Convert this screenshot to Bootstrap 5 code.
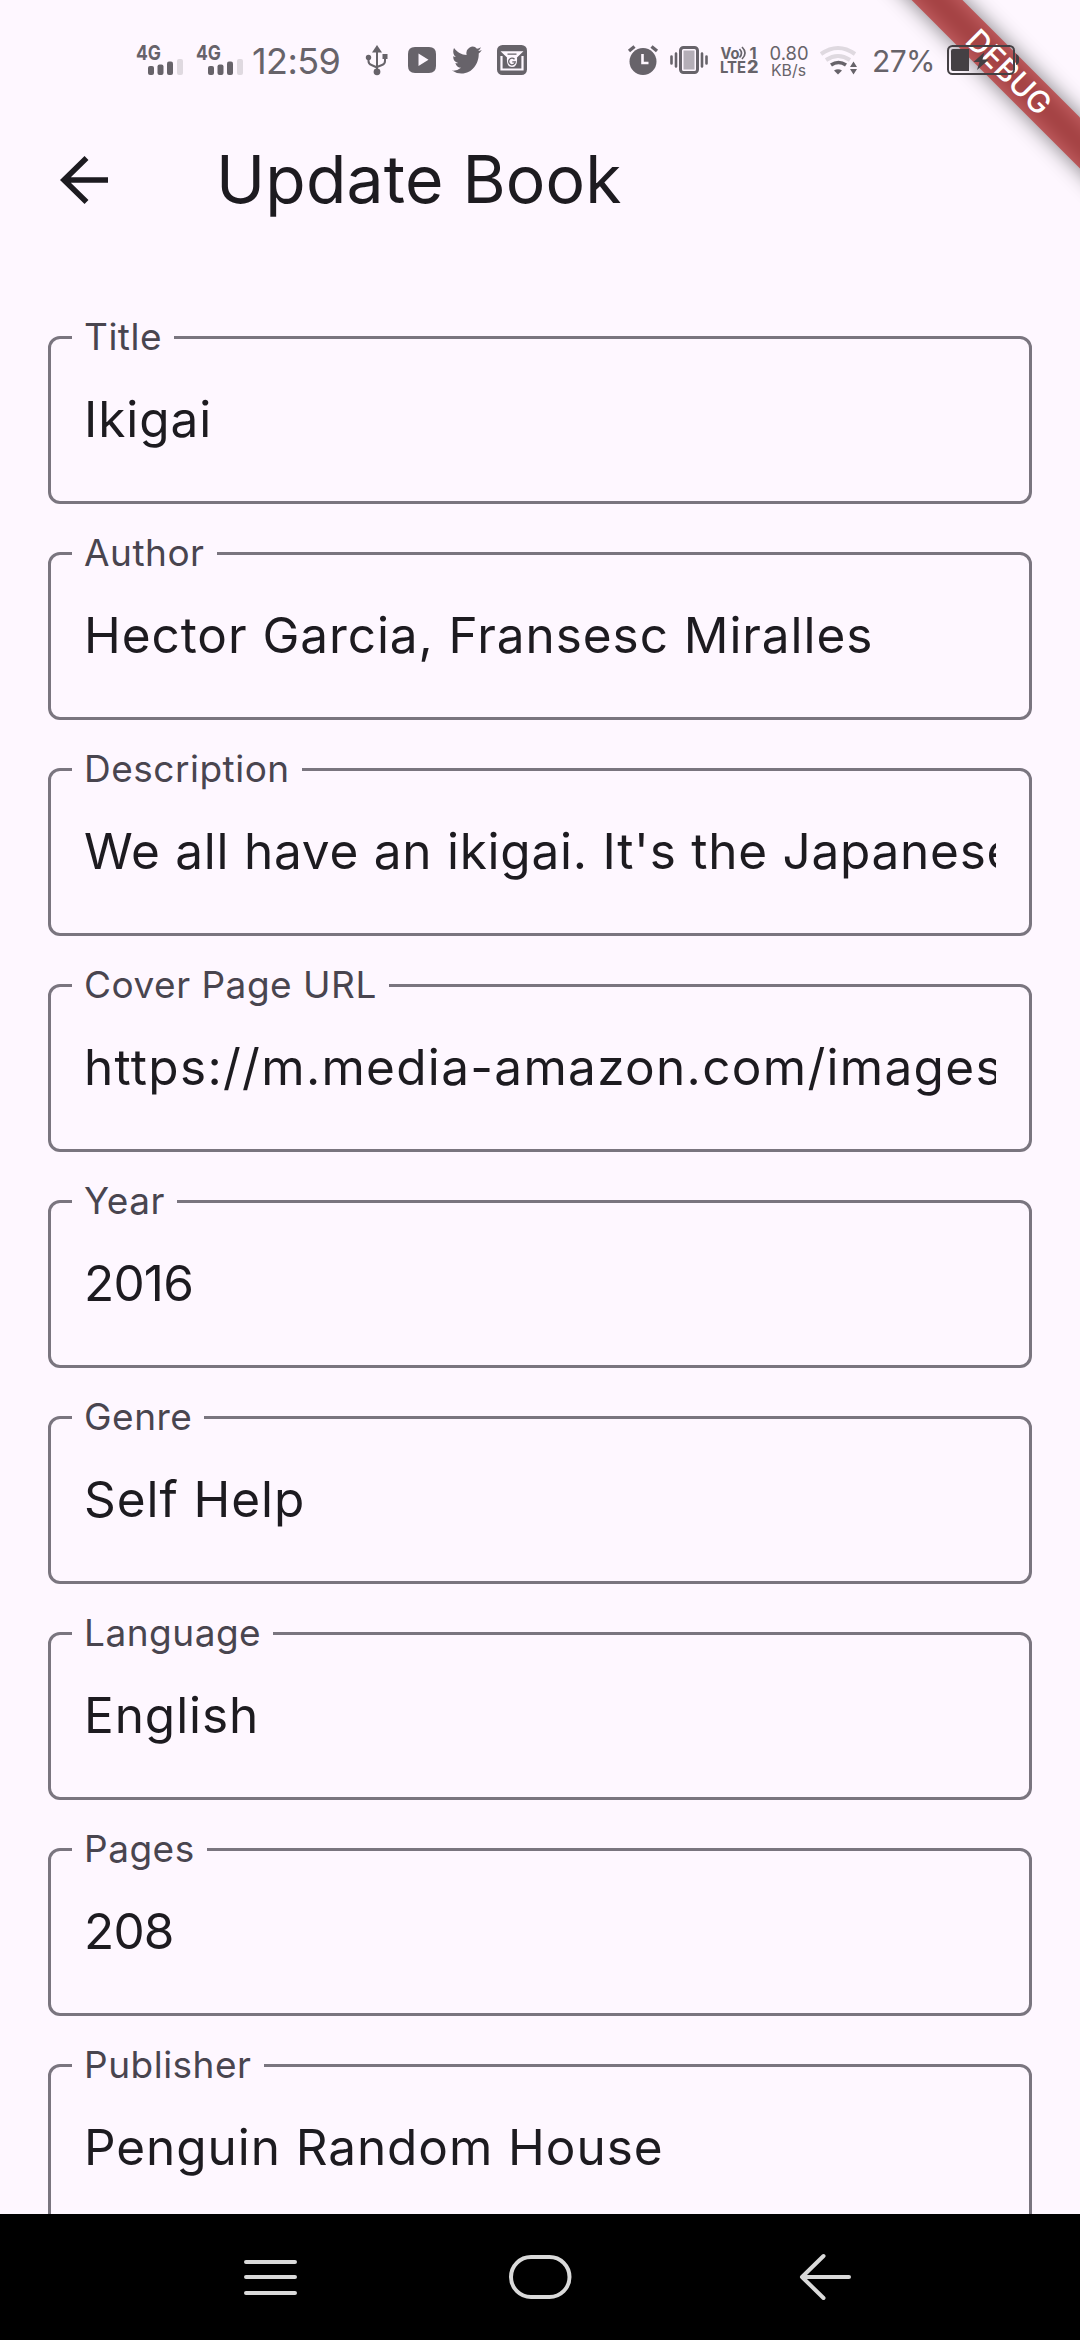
<!DOCTYPE html>
<html lang="en">
<head>
<meta charset="utf-8">
<meta name="viewport" content="width=device-width, initial-scale=1">
<title>Update Book</title>
<link href="https://cdn.jsdelivr.net/npm/bootstrap@5.3.0/dist/css/bootstrap.min.css" rel="stylesheet">
<style>
  body { background: #fef7ff; color: #1d1b20; font-family: Inter, Roboto, sans-serif; }
  .screen { width: 1080px; height: 2340px; }
  .status-bar { height: 120px; padding-left: 130px; color: #67636a; z-index: 3; }
  .status-bar svg { height: 120px; fill: #67636a; flex: none; }
  .clock { width: 104px; padding-left: 2px; font-size: 36px; font-weight: 400; letter-spacing: -.6px; line-height: 123px; }
  .percent { width: 70px; padding-left: 1px; font-size: 30px; font-weight: 400; letter-spacing: -.6px; line-height: 122px; }
  .app-bar { height: 120px; padding-left: 58px; }
  .app-title { font-size: 66px; font-weight: 400; letter-spacing: .2px; line-height: 118px; height: 120px; margin-left: 106px; }
  .book-form { padding: 96px 48px 0; gap: 48px; }
  .field { height: 168px; flex: none; border: 3px solid #7a757f; border-radius: 12px; padding: 0 33px; }
  .field-label { left: 21px; top: -26px; padding: 0 12px; background: #fef7ff; color: #49454f; font-size: 37px; font-weight: 400; line-height: 48px; letter-spacing: .5px; }
  .field-value { font-size: 49.5px; line-height: 160px; letter-spacing: .93px; font-weight: 400; }
  .field-digits { letter-spacing: -.8px; }
  .field-prose { letter-spacing: .75px; }
  .field-link { letter-spacing: 1.3px; }
  .nav-keys { height: 126px; z-index: 4; }
  .banner { right: 0; top: 0; width: 240px; height: 240px; z-index: 2; }
  .banner-shade, .banner-band { left: -41px; top: 54px; width: 420px; height: 36px; transform: rotate(45deg); }
  .banner-shade { background: rgba(0,0,0,.5); filter: blur(10.9px); }
  .banner-band { background: rgba(183,28,28,.627); color: #fff; font-size: 30.6px; font-weight: 500; line-height: 36px; }
</style>
</head>
<body>
<main class="screen position-relative overflow-hidden d-flex flex-column">
  <div class="banner position-absolute overflow-hidden">
    <div class="banner-shade position-absolute"></div>
    <div class="banner-band position-absolute text-center">DEBUG</div>
  </div>

  <header class="status-bar d-flex position-relative">
    <svg width="60" viewBox="130 0 60 120"><text x="136" y="60" font-size="20.5" font-weight="700" textLength="25" lengthAdjust="spacingAndGlyphs">4G</text><rect x="148" y="66" width="6" height="9" rx="2"/><rect x="157.5" y="64.5" width="6" height="10.5" rx="2"/><rect x="167" y="61.5" width="6" height="13.5" rx="2"/><rect x="177" y="59" width="6" height="16" rx="2" fill="#dfd9e0"/></svg>
    <svg width="60" viewBox="130 0 60 120"><text x="136" y="60" font-size="20.5" font-weight="700" textLength="25" lengthAdjust="spacingAndGlyphs">4G</text><rect x="148" y="66" width="6" height="9" rx="2"/><rect x="157.5" y="64.5" width="6" height="10.5" rx="2"/><rect x="167" y="61.5" width="6" height="13.5" rx="2"/><rect x="177" y="59" width="6" height="16" rx="2" fill="#dfd9e0"/></svg>
    <div class="clock text-nowrap">12:59</div>
    <svg width="44" viewBox="354 0 44 120"><path d="M377 45l5 7.5h-10z"/><circle cx="368.5" cy="57.500" r="2.700"/><rect x="382.500" y="54" width="5" height="5"/><circle cx="377" cy="71.800" r="3.400"/><path d="M377 51v20M368.500 58v3q0 3 3 4l5.500 2.500M385 58v3q0 3-3 4l-5 2" fill="none" stroke="#67636a" stroke-width="2"/></svg>
    <svg width="46" viewBox="398 0 46 120"><path fill-rule="evenodd" d="M415 47h14q7 0 7 7v12q0 7-7 7h-14q-7 0-7-7v-12q0-7 7-7zM418.500 53.500v12.500l10-6.200z"/></svg>
    <svg width="46" viewBox="444 0 46 120"><path transform="translate(452 43.600) scale(1.240 1.380)" d="M23.953 4.570a10 10 0 0 1-2.825.775 4.958 4.958 0 0 0 2.163-2.723c-.951.555-2.005.959-3.127 1.184a4.920 4.920 0 0 0-8.384 4.482C7.690 8.095 4.067 6.130 1.640 3.162a4.822 4.822 0 0 0-.666 2.475c0 1.710.870 3.213 2.188 4.096a4.904 4.904 0 0 1-2.228-.616v.060a4.923 4.923 0 0 0 3.946 4.827 4.996 4.996 0 0 1-2.212.085 4.936 4.936 0 0 0 4.604 3.417 9.867 9.867 0 0 1-6.102 2.105c-.390 0-.779-.023-1.170-.067a13.995 13.995 0 0 0 7.557 2.209c9.053 0 13.998-7.496 13.998-13.985 0-.210 0-.420-.015-.630A9.935 9.935 0 0 0 24 4.590z"/></svg>
    <svg width="130" viewBox="490 0 130 120"><rect x="497" y="45" width="30" height="30" rx="5.500"/><path d="M501.500 56v13.500h21V56" fill="none" stroke="#fef7ff" stroke-width="2.200"/><path d="M500.500 51.200h23l-6.500 6.300q.800 9.500-5 9.500t-5-9.500z" fill="#fef7ff"/><path d="M507.500 54.200h9M514.500 59.300a3.300 3.300 0 1 0 .8 2.500h-3" fill="none" stroke="#67636a" stroke-width="1.300"/></svg>

    <svg width="46" viewBox="620 0 46 120"><circle cx="643" cy="61.500" r="13.500"/><path d="M629 51l5.500-4.500M657 51l-5.500-4.500" stroke="#67636a" stroke-width="3.400"/><path d="M642.500 54v9h6" fill="none" stroke="#fef7ff" stroke-width="2.600"/></svg>
    <svg width="48" viewBox="666 0 48 120"><rect x="680.500" y="47.500" width="17" height="25" rx="3" fill="none" stroke="#67636a" stroke-width="3"/><rect x="683.500" y="50.500" width="11" height="19" fill="#b4aeb7"/><path d="M671.500 56.500v7M676 53.500v13M702 53.500v13M706.500 56.500v7" stroke="#67636a" stroke-width="2.600" stroke-linecap="round"/></svg>
    <svg width="50" viewBox="714 0 50 120" font-weight="700"><text x="720.500" y="58.500" font-size="16" textLength="19" lengthAdjust="spacingAndGlyphs">Vo</text><path d="M739.500 49q4 4 0 8.500M742 47q6 6 0 12" fill="none" stroke="#67636a" stroke-width="1.700"/><text x="749.500" y="58.500" font-size="16.500">1</text><text x="720" y="73" font-size="16.500" textLength="26" lengthAdjust="spacingAndGlyphs">LTE</text><text x="747" y="73" font-size="17" font-weight="800" textLength="11.500" lengthAdjust="spacingAndGlyphs">2</text></svg>
    <svg width="51" viewBox="764 0 51 120"><text x="769.500" y="60" font-size="19" textLength="39" lengthAdjust="spacingAndGlyphs">0.80</text><text x="771" y="75.500" font-size="16" textLength="35" lengthAdjust="spacingAndGlyphs">KB/s</text></svg>
    <svg width="56" viewBox="815 0 56 120"><g fill="none" stroke-width="3.600"><path d="M821 54q17-12 34 0M826 60q12-8 24 0" stroke="#dfd9e0" stroke-width="4"/><path d="M831 65q7.500-5 15 0" stroke="#67636a"/></g><path d="M834 70.500q4-2.500 8 0l-4 4zM850 67l3.500-5.500 3.500 5.500zM850 69l3.500 5.500 3.500-5.500z"/></svg>
    <div class="percent">27%</div>
    <svg width="90" viewBox="941 0 90 120"><rect x="948" y="46" width="66" height="28" rx="4.500" fill="none" stroke="#444044" stroke-width="2"/><path d="M951 51q0-2 2-2h16v22h-16q-2 0-2-2zM1016 54q3 1 3 4v3q0 3-3 4zM984.500 52l-11 10h6l-2.500 8 12-10.500h-6.500z" fill="#444044"/></svg>
  </header>

  <nav class="app-bar d-flex align-items-center">
    <svg width="52" height="120" viewBox="58 0 52 120" fill="none" stroke="#1d1b20" stroke-width="5.600"><path d="M108 60H64M86.500 38L64 60l22.500 22"/></svg>
    <h1 class="app-title mb-0 text-nowrap">Update Book</h1>
  </nav>

  <form class="book-form d-flex flex-column flex-grow-1 overflow-hidden">
    <div class="field position-relative"><label class="field-label position-absolute">Title</label><div class="field-value overflow-hidden text-nowrap">Ikigai</div></div>
    <div class="field position-relative"><label class="field-label position-absolute">Author</label><div class="field-value overflow-hidden text-nowrap">Hector Garcia, Fransesc Miralles</div></div>
    <div class="field position-relative"><label class="field-label position-absolute">Description</label><div class="field-value field-prose overflow-hidden text-nowrap">We all have an ikigai. It's the Japanese</div></div>
    <div class="field position-relative"><label class="field-label position-absolute">Cover Page URL</label><div class="field-value field-link overflow-hidden text-nowrap">https://m.media-amazon.com/images</div></div>
    <div class="field position-relative"><label class="field-label position-absolute">Year</label><div class="field-value field-digits overflow-hidden text-nowrap">2016</div></div>
    <div class="field position-relative"><label class="field-label position-absolute">Genre</label><div class="field-value overflow-hidden text-nowrap">Self Help</div></div>
    <div class="field position-relative"><label class="field-label position-absolute">Language</label><div class="field-value overflow-hidden text-nowrap">English</div></div>
    <div class="field position-relative"><label class="field-label position-absolute">Pages</label><div class="field-value field-digits overflow-hidden text-nowrap">208</div></div>
    <div class="field position-relative"><label class="field-label position-absolute">Publisher</label><div class="field-value overflow-hidden text-nowrap">Penguin Random House</div></div>
  </form>

  <footer class="nav-keys bg-black d-flex flex-shrink-0 justify-content-center">
    <svg width="270" height="126" viewBox="135 0 270 126" stroke="#dadada" stroke-width="4" stroke-linecap="round"><path d="M246 48h49M246 63h49M246 79h49"/></svg>
    <svg width="270" height="126" viewBox="405 0 270 126" fill="none" stroke="#dadada" stroke-width="4"><rect x="511" y="43" width="58.500" height="40" rx="20"/></svg>
    <svg width="270" height="126" viewBox="675 0 270 126" fill="none" stroke="#dadada" stroke-width="4" stroke-linecap="round" stroke-linejoin="round"><path d="M849 63H802M823.500 42L802 63l21.500 21"/></svg>
  </footer>
</main>
<script src="https://cdn.jsdelivr.net/npm/bootstrap@5.3.0/dist/js/bootstrap.bundle.min.js"></script>
</body>
</html>
